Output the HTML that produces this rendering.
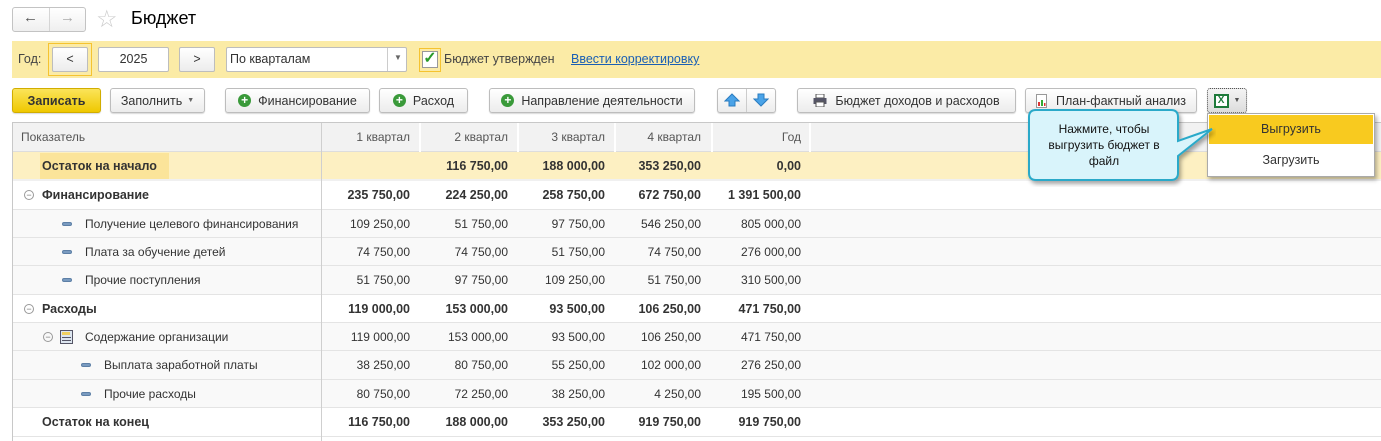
<!DOCTYPE html>
<html><head><meta charset="utf-8"><style>
*{box-sizing:border-box;margin:0;padding:0}
body{width:1381px;height:441px;background:#fff;font-family:Arial,"Liberation Sans",sans-serif;font-size:12.5px;color:#333;position:relative;overflow:hidden}
.a{position:absolute}
.btn{position:absolute;top:88px;height:25px;border:1px solid #bdbdbd;border-radius:3px;background:linear-gradient(#fff,#ececec);display:flex;align-items:center;justify-content:center;font-size:12.5px;color:#333;box-shadow:0 1px 1px rgba(0,0,0,.15)}
.plus{width:13px;height:13px;border-radius:50%;background:#3a9a3a;color:#fff;font-weight:bold;font-size:12px;line-height:13px;text-align:center;margin-right:7px}
.row{position:absolute;left:12px;right:0;border-bottom:1px solid #e4e4e4;font-size:12px}
.c{position:absolute;top:0;height:100%;display:flex;align-items:center}
.n{justify-content:flex-end}
.b{font-weight:bold;font-size:12.5px}
.dash{position:absolute;width:10px;height:4px;background:#7a9bc0;border-radius:2px;border:1px solid #5d7fa6}
.circ{position:absolute;width:10px;height:10px;border:1px solid #999;border-radius:50%;font-size:9px;line-height:8px;text-align:center;color:#777}
</style></head><body>
<div class="a" style="left:12px;top:7px;width:74px;height:25px;border:1px solid #c3c3c3;border-radius:3px;background:linear-gradient(#fff,#efefef)"></div>
<div class="a" style="left:49px;top:8px;width:1px;height:23px;background:#d5d5d5"></div>
<div class="a" style="left:23px;top:9px;font-size:15px;color:#555;font-weight:bold">&#8592;</div>
<div class="a" style="left:60px;top:9px;font-size:15px;color:#aaa;font-weight:bold">&#8594;</div>
<div class="a" style="left:96px;top:5px;font-size:24px;color:#ccc">&#9734;</div>
<div class="a" style="left:131px;top:8px;font-size:18px;color:#000">Бюджет</div>
<div class="a" style="left:12px;top:41px;width:1369px;height:37px;background:#fbeba6"></div>
<div class="a" style="left:18px;top:52px;color:#444">Год:</div>
<div class="a" style="left:48px;top:43px;width:44px;height:33px;border:1px solid #f5c330"></div>
<div class="a" style="left:52px;top:47px;width:36px;height:25px;border:1px solid #bdbdbd;border-radius:2px;background:linear-gradient(#fff,#ececec);text-align:center;line-height:23px">&lt;</div>
<div class="a" style="left:98px;top:47px;width:71px;height:25px;border:1px solid #bdbdbd;border-radius:2px;background:#fff;text-align:center;line-height:23px">2025</div>
<div class="a" style="left:179px;top:47px;width:36px;height:25px;border:1px solid #bdbdbd;border-radius:2px;background:linear-gradient(#fff,#ececec);text-align:center;line-height:23px">&gt;</div>
<div class="a" style="left:226px;top:47px;width:181px;height:25px;border:1px solid #bdbdbd;border-radius:2px;background:#fff;line-height:23px;padding-left:3px">По кварталам</div>
<div class="a" style="left:387px;top:48px;width:1px;height:23px;background:#ccc"></div>
<div class="a" style="left:394px;top:53px;font-size:8px;color:#666">&#9660;</div>
<div class="a" style="left:419px;top:48px;width:22px;height:24px;border:1px solid #f5c330"></div>
<div class="a" style="left:422px;top:51px;width:16px;height:17px;border:1px solid #999;background:#fff;color:#2a9a2a;font-size:16px;line-height:14px;text-align:center;font-weight:bold">&#10003;</div>
<div class="a" style="left:444px;top:52px;color:#444">Бюджет утвержден</div>
<div class="a" style="left:571px;top:52px;color:#1a5fb4;text-decoration:underline">Ввести корректировку</div>
<div class="btn" style="left:12px;width:89px;background:linear-gradient(#fbe45a,#efc800);border-color:#d1ad00;font-weight:bold;color:#333">Записать</div>
<div class="btn" style="left:110px;width:95px">Заполнить <span style="font-size:7px;margin-left:5px;color:#666">&#9660;</span></div>
<div class="btn" style="left:225px;width:145px"><span class="plus">+</span>Финансирование</div>
<div class="btn" style="left:379px;width:89px"><span class="plus">+</span>Расход</div>
<div class="btn" style="left:489px;width:206px"><span class="plus">+</span>Направление деятельности</div>
<div class="btn" style="left:717px;width:59px"></div>
<div class="a" style="left:746px;top:89px;width:1px;height:23px;background:#ccc"></div>
<svg class="a" style="left:724px;top:93px" width="16" height="14"><path d="M8 1 L15 8 L11 8 L11 13 L5 13 L5 8 L1 8Z" fill="#4aa3e8" stroke="#2a7cc0"/></svg>
<svg class="a" style="left:753px;top:93px" width="16" height="14"><path d="M8 13 L15 6 L11 6 L11 1 L5 1 L5 6 L1 6Z" fill="#4aa3e8" stroke="#2a7cc0"/></svg>
<div class="btn" style="left:797px;width:219px"><svg width="14" height="13" style="margin-right:8px"><rect x="3" y="0" width="8" height="4" fill="#fff" stroke="#555"/><rect x="0.5" y="4" width="13" height="6" fill="#556" /><rect x="3" y="8" width="8" height="5" fill="#fff" stroke="#555"/></svg>Бюджет доходов и расходов</div>
<div class="btn" style="left:1025px;width:172px"><svg width="11" height="14" style="margin-right:9px"><rect x="0.5" y="0.5" width="10" height="13" fill="#fff" stroke="#999"/><rect x="2" y="8" width="2" height="4" fill="#d33"/><rect x="5" y="6" width="2" height="6" fill="#3a3"/><rect x="8" y="9" width="1.5" height="3" fill="#d33"/></svg>План-фактный анализ</div>
<div class="btn" style="left:1207px;width:40px;border:1px dotted #555;background:linear-gradient(#f4f4f4,#dcdcdc)"><span style="display:inline-block;width:15px;height:14px;border:2px solid #1d7a3a;color:#1d7a3a;font-weight:bold;font-size:10px;line-height:10px;text-align:center;background:#fff">X</span><span style="font-size:7px;margin-left:5px;color:#555">&#9660;</span></div>
<div class="a" style="left:12px;top:122px;right:0;height:1px;background:#c8c8c8"></div>
<div class="row" style="top:123px;height:29px;background:#f2f2f2;border-bottom:1px solid #ddd;color:#555;font-size:12px">
<div class="c" style="left:9px">Показатель</div>
<div class="c n" style="left:309px;width:89px">1 квартал</div>
<div class="c n" style="left:407px;width:89px">2 квартал</div>
<div class="c n" style="left:505px;width:88px">3 квартал</div>
<div class="c n" style="left:602px;width:87px">4 квартал</div>
<div class="c n" style="left:699px;width:90px">Год</div>
</div>
<div class="a" style="left:419px;top:123px;width:2px;height:58px;background:#fff"></div>
<div class="a" style="left:517px;top:123px;width:2px;height:58px;background:#fff"></div>
<div class="a" style="left:614px;top:123px;width:2px;height:58px;background:#fff"></div>
<div class="a" style="left:711px;top:123px;width:2px;height:58px;background:#fff"></div>
<div class="a" style="left:809px;top:123px;width:2px;height:58px;background:#fff"></div>
<div class="row" style="top:152px;height:29px;background:#fdf0c2;border-bottom:2px solid #f0f0f0">
<div class="a" style="left:28px;top:1px;width:129px;height:26px;background:#fbe49a"></div>
<div class="c b" style="left:30px">Остаток на начало</div>
<div class="c n b" style="left:407px;width:89px">116 750,00</div>
<div class="c n b" style="left:505px;width:88px">188 000,00</div>
<div class="c n b" style="left:602px;width:87px">353 250,00</div>
<div class="c n b" style="left:699px;width:90px">0,00</div>
</div>

<div class="row" style="top:181px;height:29px"><div class="circ" style="left:12px;top:9px">−</div><div class="c b" style="left:30px">Финансирование</div>
<div class="c n b" style="left:309px;width:89px">235 750,00</div><div class="c n b" style="left:407px;width:89px">224 250,00</div><div class="c n b" style="left:505px;width:88px">258 750,00</div><div class="c n b" style="left:602px;width:87px">672 750,00</div><div class="c n b" style="left:699px;width:90px">1 391 500,00</div></div>

<div class="row" style="top:210px;height:28px;background:#f9f9f9"><div class="dash" style="left:50px;top:12px"></div><div class="c" style="left:73px">Получение целевого финансирования</div>
<div class="c n" style="left:309px;width:89px">109 250,00</div><div class="c n" style="left:407px;width:89px">51 750,00</div><div class="c n" style="left:505px;width:88px">97 750,00</div><div class="c n" style="left:602px;width:87px">546 250,00</div><div class="c n" style="left:699px;width:90px">805 000,00</div></div>

<div class="row" style="top:238px;height:28px;background:#f9f9f9"><div class="dash" style="left:50px;top:12px"></div><div class="c" style="left:73px">Плата за обучение детей</div>
<div class="c n" style="left:309px;width:89px">74 750,00</div><div class="c n" style="left:407px;width:89px">74 750,00</div><div class="c n" style="left:505px;width:88px">51 750,00</div><div class="c n" style="left:602px;width:87px">74 750,00</div><div class="c n" style="left:699px;width:90px">276 000,00</div></div>

<div class="row" style="top:266px;height:29px;background:#f9f9f9"><div class="dash" style="left:50px;top:12px"></div><div class="c" style="left:73px">Прочие поступления</div>
<div class="c n" style="left:309px;width:89px">51 750,00</div><div class="c n" style="left:407px;width:89px">97 750,00</div><div class="c n" style="left:505px;width:88px">109 250,00</div><div class="c n" style="left:602px;width:87px">51 750,00</div><div class="c n" style="left:699px;width:90px">310 500,00</div></div>

<div class="row" style="top:295px;height:28px"><div class="circ" style="left:12px;top:9px">−</div><div class="c b" style="left:30px">Расходы</div>
<div class="c n b" style="left:309px;width:89px">119 000,00</div><div class="c n b" style="left:407px;width:89px">153 000,00</div><div class="c n b" style="left:505px;width:88px">93 500,00</div><div class="c n b" style="left:602px;width:87px">106 250,00</div><div class="c n b" style="left:699px;width:90px">471 750,00</div></div>

<div class="row" style="top:323px;height:28px;background:#f9f9f9"><div class="circ" style="left:31px;top:9px">−</div><svg class="a" style="left:48px;top:7px" width="13" height="14"><rect x="0.5" y="0.5" width="12" height="13" fill="#dde6f0" stroke="#556"/><rect x="2" y="2" width="8" height="3" fill="#f0d060"/><rect x="2" y="7" width="9" height="1" fill="#556"/><rect x="2" y="10" width="9" height="1" fill="#556"/></svg><div class="c" style="left:73px">Содержание организации</div>
<div class="c n" style="left:309px;width:89px">119 000,00</div><div class="c n" style="left:407px;width:89px">153 000,00</div><div class="c n" style="left:505px;width:88px">93 500,00</div><div class="c n" style="left:602px;width:87px">106 250,00</div><div class="c n" style="left:699px;width:90px">471 750,00</div></div>

<div class="row" style="top:351px;height:29px;background:#f9f9f9"><div class="dash" style="left:69px;top:12px"></div><div class="c" style="left:92px">Выплата заработной платы</div>
<div class="c n" style="left:309px;width:89px">38 250,00</div><div class="c n" style="left:407px;width:89px">80 750,00</div><div class="c n" style="left:505px;width:88px">55 250,00</div><div class="c n" style="left:602px;width:87px">102 000,00</div><div class="c n" style="left:699px;width:90px">276 250,00</div></div>

<div class="row" style="top:380px;height:28px;background:#f9f9f9"><div class="dash" style="left:69px;top:12px"></div><div class="c" style="left:92px">Прочие расходы</div>
<div class="c n" style="left:309px;width:89px">80 750,00</div><div class="c n" style="left:407px;width:89px">72 250,00</div><div class="c n" style="left:505px;width:88px">38 250,00</div><div class="c n" style="left:602px;width:87px">4 250,00</div><div class="c n" style="left:699px;width:90px">195 500,00</div></div>

<div class="row" style="top:408px;height:29px"><div class="c b" style="left:30px">Остаток на конец</div>
<div class="c n b" style="left:309px;width:89px">116 750,00</div><div class="c n b" style="left:407px;width:89px">188 000,00</div><div class="c n b" style="left:505px;width:88px">353 250,00</div><div class="c n b" style="left:602px;width:87px">919 750,00</div><div class="c n b" style="left:699px;width:90px">919 750,00</div></div>

<div class="a" style="left:12px;top:122px;width:1px;height:319px;background:#c8c8c8;z-index:2"></div>
<div class="a" style="left:321px;top:123px;width:1px;height:318px;background:#cfcfcf;z-index:2"></div>

<svg class="a" style="left:1026px;top:108px;z-index:5" width="190" height="80">
<defs><filter id="s"><feDropShadow dx="2" dy="3" stdDeviation="2" flood-opacity="0.35"/></filter></defs>
<path d="M10 2 H145 Q152 2 152 9 V33 L186 21 L152 48 V65 Q152 72 145 72 H10 Q3 72 3 65 V9 Q3 2 10 2Z" fill="#d9f4fb" stroke="#29a9c9" stroke-width="2" filter="url(#s)"/>
</svg>
<div class="a" style="left:1036px;top:121px;width:136px;text-align:center;font-size:12px;line-height:16px;color:#111;z-index:6">Нажмите, чтобы выгрузить бюджет в файл</div>
<div class="a" style="left:1207px;top:113px;width:168px;height:64px;background:#fff;border:1px solid #aaa;box-shadow:2px 3px 4px rgba(0,0,0,.3);z-index:4">
<div style="margin:1px;height:29px;background:#f8ca1f;text-align:center;line-height:29px;color:#333">Выгрузить</div>
<div style="height:30px;text-align:center;line-height:30px;color:#333">Загрузить</div>
</div>
</body></html>
